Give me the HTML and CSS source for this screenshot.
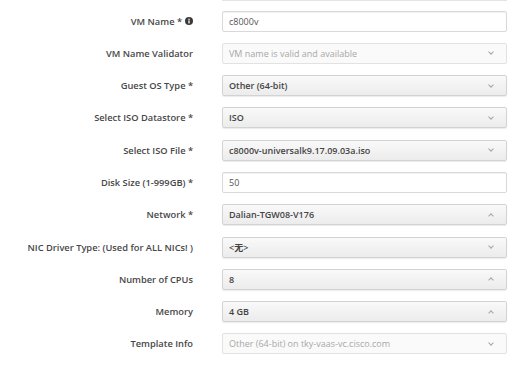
FILE: index.html
```html
<!DOCTYPE html>
<html>
<head>
<meta charset="utf-8">
<link rel="stylesheet" href="styles.css">
</head>
<body>
<div class="topline"></div>
<form class="form">
  <div class="row">
    <label class="label">VM Name * <svg class="info" viewBox="0 0 10 10" width="8" height="8"><circle cx="5" cy="5" r="5" fill="#3a3a3a"/><rect x="4.2" y="4.2" width="1.6" height="3.8" fill="#fff"/><circle cx="5" cy="2.7" r="0.9" fill="#fff"/></svg></label>
    <div class="field input"><span class="value">c8000v</span></div>
  </div>
  <div class="row">
    <label class="label">VM Name Validator</label>
    <div class="field disabled"><span class="value">VM name is valid and available</span><span class="chev down"></span></div>
  </div>
  <div class="row">
    <label class="label">Guest OS Type *</label>
    <div class="field select"><span class="value">Other (64-bit)</span><span class="chev down"></span></div>
  </div>
  <div class="row">
    <label class="label">Select ISO Datastore *</label>
    <div class="field select"><span class="value">ISO</span><span class="chev down"></span></div>
  </div>
  <div class="row">
    <label class="label">Select ISO File *</label>
    <div class="field select"><span class="value">c8000v-universalk9.17.09.03a.iso</span><span class="chev down"></span></div>
  </div>
  <div class="row">
    <label class="label">Disk Size (1-999GB) *</label>
    <div class="field input"><span class="value">50</span></div>
  </div>
  <div class="row">
    <label class="label">Network *</label>
    <div class="field select"><span class="value">Dalian-TGW08-V176</span><span class="chev up"></span></div>
  </div>
  <div class="row">
    <label class="label">NIC Driver Type: (Used for ALL NICs! )</label>
    <div class="field select"><span class="value">&lt;无&gt;</span><span class="chev down"></span></div>
  </div>
  <div class="row">
    <label class="label">Number of CPUs</label>
    <div class="field select"><span class="value">8</span><span class="chev up"></span></div>
  </div>
  <div class="row">
    <label class="label">Memory</label>
    <div class="field select"><span class="value">4 GB</span><span class="chev up"></span></div>
  </div>
  <div class="row">
    <label class="label">Template Info</label>
    <div class="field disabled"><span class="value">Other (64-bit) on tky-vaas-vc.cisco.com</span><span class="chev down"></span></div>
  </div>
</form>
</body>
</html>
```
FILE: styles.css
```css
html, body {
  margin: 0;
  padding: 0;
  background: #ffffff;
  overflow: hidden;
}
body {
  font-family: "Open Sans", "Noto Sans CJK SC", sans-serif;
  width: 530px;
  height: 375px;
}
.topline {
  margin-left: 222px;
  width: 285px;
  height: 1px;
  background: #e4e4e4;
}
.form {
  display: flex;
  flex-direction: column;
  gap: 11.3px;
  padding-top: 9.5px;
}
.row {
  display: grid;
  grid-template-columns: 193px 285px;
  column-gap: 29px;
  align-items: center;
}
.label {
  text-align: right;
  font-size: 9.3px;
  font-weight: 600;
  color: #474747;
  white-space: nowrap;
  display: flex;
  justify-content: flex-end;
  align-items: center;
  gap: 3px;
}
.info {
  display: block;
}
.field {
  box-sizing: border-box;
  height: 21px;
  border: 1px solid #d9d9d9;
  border-radius: 2px;
  display: flex;
  align-items: center;
  justify-content: space-between;
  padding: 0 13px 0 6px;
  font-size: 9px;
  color: #3c3c3c;
}
.input {
  background: #ffffff;
  box-shadow: inset 0 1px 1px rgba(0, 0, 0, 0.06);
}
.input .value {
  color: #555;
}
.select {
  background: linear-gradient(#f9f9f9, #ececec);
  border-color: #d3d3d3;
  box-shadow: 0 1px 1px rgba(0, 0, 0, 0.08);
  font-weight: 600;
}
.select .value {
  color: #444;
}
.disabled {
  background: #fafafa;
  border-color: #e2e2e2;
}
.disabled .value {
  color: #a8a8a8;
}
.chev {
  width: 3px;
  height: 3px;
  border-right: 1px solid #a5a5a5;
  border-bottom: 1px solid #a5a5a5;
}
.chev.down {
  transform: translateY(-1px) rotate(45deg);
}
.chev.up {
  transform: translateY(1px) rotate(-135deg);
}
```
